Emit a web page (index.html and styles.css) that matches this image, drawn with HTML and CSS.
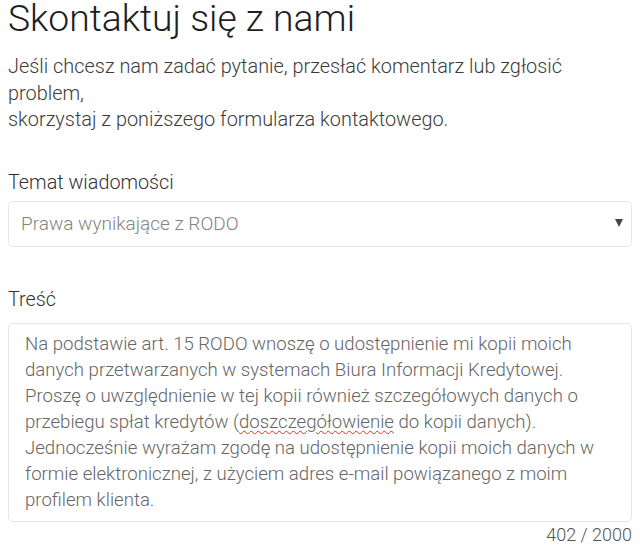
FILE: index.html
```html
<!DOCTYPE html>
<html lang="pl">
<head>
<meta charset="utf-8">
<link rel="stylesheet" href="styles.css">
</head>
<body>
<main class="page">
  <h1 class="title">Skontaktuj się z nami</h1>
  <p class="intro">Jeśli chcesz nam zadać pytanie, przesłać komentarz lub zgłosić problem,<br>skorzystaj z poniższego formularza kontaktowego.</p>

  <div class="field field-topic">
    <div class="label">Temat wiadomości</div>
    <div class="select">
      <span class="select-value">Prawa wynikające z RODO</span>
      <span class="select-arrow"></span>
    </div>
  </div>

  <div class="field field-body">
    <div class="label">Treść</div>
    <div class="textarea">Na podstawie art. 15 RODO wnoszę o udostępnienie mi kopii moich<br>danych przetwarzanych w systemach Biura Informacji Kredytowej.<br>Proszę o uwzględnienie w tej kopii również szczegółowych danych o<br>przebiegu spłat kredytów (<span class="misspelled">doszczegółowienie</span> do kopii danych).<br>Jednocześnie wyrażam zgodę na udostępnienie kopii moich danych w<br>formie elektronicznej, z użyciem adres e-mail powiązanego z moim<br>profilem klienta.</div>
    <div class="counter">402 / 2000</div>
  </div>
</main>
</body>
</html>
```

FILE: styles.css
```css
html, body {
  margin: 0;
  padding: 0;
  background: #fff;
}
body {
  font-family: "Roboto Light", Roboto, "Liberation Sans", sans-serif;
  font-weight: 300;
}
.page {
  padding: 0 8px;
}
.title {
  margin: 0;
  font-size: 37.3px;
  font-weight: 300;
  line-height: 36px;
  color: #1e1e1e;
}
.intro {
  margin: 18px 0 0;
  font-size: 19.9px;
  line-height: 26.5px;
  color: #3c3c3c;
}
.field-topic {
  margin-top: 36px;
}
.label {
  font-size: 19.8px;
  line-height: 26px;
  color: #333;
}
.select {
  margin-top: 5px;
  height: 44px;
  border: 1px solid #e6e6e6;
  border-radius: 5px;
  display: flex;
  align-items: center;
  padding: 0 8px 0 12px;
}
.select-value {
  flex: 1;
  font-size: 19px;
  color: #838383;
}
.select-arrow {
  width: 0;
  height: 0;
  border-left: 4px solid transparent;
  border-right: 4px solid transparent;
  border-top: 8px solid #454545;
  margin-top: -1px;
}
.field-body {
  margin-top: 40px;
}
.textarea {
  margin-top: 10px;
  border: 1px solid #e6e6e6;
  border-radius: 5px;
  padding: 7px 16px 8px 16px;
  font-size: 18.6px;
  line-height: 26px;
  color: #666;
}
.misspelled {
  text-decoration: underline wavy #e0302a;
  text-decoration-thickness: 1px;
  text-underline-offset: 2px;
}
.counter {
  text-align: right;
  font-size: 18px;
  line-height: 26px;
  color: #555;
  margin-top: 0;
}
```
